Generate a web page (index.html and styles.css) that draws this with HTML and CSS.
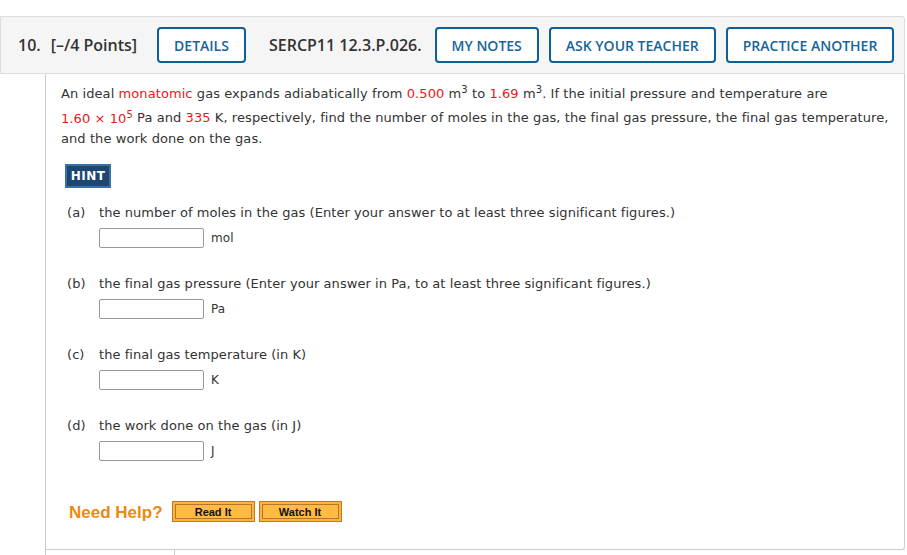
FILE: index.html
```html
<!DOCTYPE html>
<html lang="en">
<head>
<meta charset="utf-8">
<title>Question 10</title>
<link rel="stylesheet" href="styles.css">
</head>
<body>
<div class="question">
  <div class="qhead">
    <span class="qnum">10.</span>
    <span class="qpoints">[–/4 Points]</span>
    <button class="qbtn qbtn-details">DETAILS</button>
    <span class="qcode">SERCP11 12.3.P.026.</span>
    <button class="qbtn qbtn-notes">MY NOTES</button>
    <button class="qbtn qbtn-ask">ASK YOUR TEACHER</button>
    <button class="qbtn qbtn-practice">PRACTICE ANOTHER</button>
  </div>
  <div class="qbody">
    <div class="qmain">
      <p class="prompt">An ideal <span class="red">monatomic</span> gas expands adiabatically from <span class="red">0.500</span> m<sup>3</sup> to <span class="red">1.69</span> m<sup>3</sup>. If the initial pressure and temperature are<br><span class="red">1.60 × 10<sup>5</sup></span> Pa and <span class="red">335</span> K, respectively, find the number of moles in the gas, the final gas pressure, the final gas temperature,<br>and the work done on the gas.</p>
      <div class="hint-row"><span class="hint">HINT</span></div>

      <div class="part">
        <span class="plabel">(a)</span>
        <span class="ptext">the number of moles in the gas (Enter your answer to at least three significant figures.)</span>
        <span class="pinput"><span class="box"></span><span class="unit">mol</span></span>
      </div>
      <div class="part">
        <span class="plabel">(b)</span>
        <span class="ptext">the final gas pressure (Enter your answer in Pa, to at least three significant figures.)</span>
        <span class="pinput"><span class="box"></span><span class="unit">Pa</span></span>
      </div>
      <div class="part">
        <span class="plabel">(c)</span>
        <span class="ptext">the final gas temperature (in K)</span>
        <span class="pinput"><span class="box"></span><span class="unit">K</span></span>
      </div>
      <div class="part">
        <span class="plabel">(d)</span>
        <span class="ptext">the work done on the gas (in J)</span>
        <span class="pinput"><span class="box"></span><span class="unit">J</span></span>
      </div>

      <div class="help">
        <span class="help-title">Need Help?</span>
        <span class="hbtn"><span class="hbtn-in">Read It</span></span>
        <span class="hbtn"><span class="hbtn-in">Watch It</span></span>
      </div>
    </div>
    <div class="next"></div>
  </div>
</div>
</body>
</html>
```

FILE: styles.css
```css
html, body {
  margin: 0;
  padding: 0;
  background: #ffffff;
}

body {
  padding-top: 16px;
  font-family: "DejaVu Sans", Verdana, sans-serif;
  color: #333333;
}

.question {
  width: 905px;
}

.qhead {
  box-sizing: border-box;
  height: 58px;
  display: flex;
  align-items: center;
  padding-left: 17px;
  background: #f5f5f5;
  border: 1px solid #dddddd;
  border-radius: 0 3px 0 0;
  font-family: "Open Sans", sans-serif;
  font-weight: 600;
  font-size: 16px;
  color: #333333;
}

.qnum {
  margin-right: 10px;
}

.qbtn {
  box-sizing: border-box;
  height: 36px;
  padding: 0 15px;
  border: 2px solid #0f5f98;
  border-radius: 4px;
  background: #ffffff;
  font-family: "Open Sans", sans-serif;
  font-weight: 600;
  font-size: 14px;
  color: #17649b;
  letter-spacing: 0;
}

.qbtn-details { margin-left: 20px; }
.qcode { margin-left: 23px; }
.qbtn-notes { margin-left: 13px; }
.qbtn-ask { margin-left: 10px; }
.qbtn-practice { margin-left: 10px; }

.qbody {
  margin-left: 45px;
  border-left: 1px solid #cccccc;
}

.qmain {
  padding: 6px 14px 26px 15px;
  border-right: 1px solid #cccccc;
  border-bottom: 1px solid #cccccc;
  border-radius: 0 0 3px 0;
}

.prompt {
  margin: 0;
  font-size: 13px;
  line-height: 20px;
  letter-spacing: 0.08px;
  white-space: nowrap;
}

.prompt sup {
  font-size: 10px;
  line-height: 20px;
}

.red {
  color: #e8181a;
}

.hint-row {
  margin-top: 15px;
  margin-left: 4px;
  height: 24px;
}

.hint {
  box-sizing: border-box;
  display: inline-flex;
  align-items: center;
  justify-content: center;
  width: 46px;
  height: 24px;
  background: #1d4670;
  border: 2px solid #3b72a6;
  color: #ffffff;
  font-family: "DejaVu Sans", Verdana, sans-serif;
  font-weight: bold;
  font-size: 12px;
  letter-spacing: 0.5px;
}

.part {
  display: grid;
  grid-template-columns: 32px auto;
  row-gap: 5px;
  margin-left: 6px;
  margin-top: 15px;
  font-size: 13px;
  line-height: 20px;
  letter-spacing: 0.06px;
}

.part + .part {
  margin-top: 26px;
}

.plabel {
  grid-column: 1;
}

.ptext {
  grid-column: 2;
}

.pinput {
  grid-column: 2;
  display: flex;
  align-items: center;
  height: 20px;
}

.box {
  box-sizing: border-box;
  width: 105px;
  height: 20px;
  border: 1px solid #999999;
  border-radius: 2px;
  background: #ffffff;
}

.unit {
  margin-left: 7px;
  font-size: 12px;
}

.help {
  display: flex;
  align-items: center;
  margin-top: 40px;
  margin-left: 8px;
}

.help-title {
  font-family: "Liberation Sans", Arial, sans-serif;
  font-weight: bold;
  font-size: 17px;
  color: #ea8a10;
  margin-right: 9px;
  padding-top: 2px;
}

.hbtn {
  box-sizing: border-box;
  display: inline-block;
  width: 83px;
  height: 21px;
  padding: 2px;
  border: 1px solid #c1782a;
  background: #fdb43c;
  margin-right: 4px;
}

.hbtn-in {
  box-sizing: border-box;
  display: flex;
  align-items: center;
  justify-content: center;
  height: 15px;
  border: 1px solid #b5762c;
  background: #ffbb42;
  font-family: "Liberation Sans", Arial, sans-serif;
  font-weight: bold;
  font-size: 11px;
  color: #111111;
}

.next {
  margin-left: 128px;
  height: 7px;
  border-left: 1px solid #cccccc;
}
```
